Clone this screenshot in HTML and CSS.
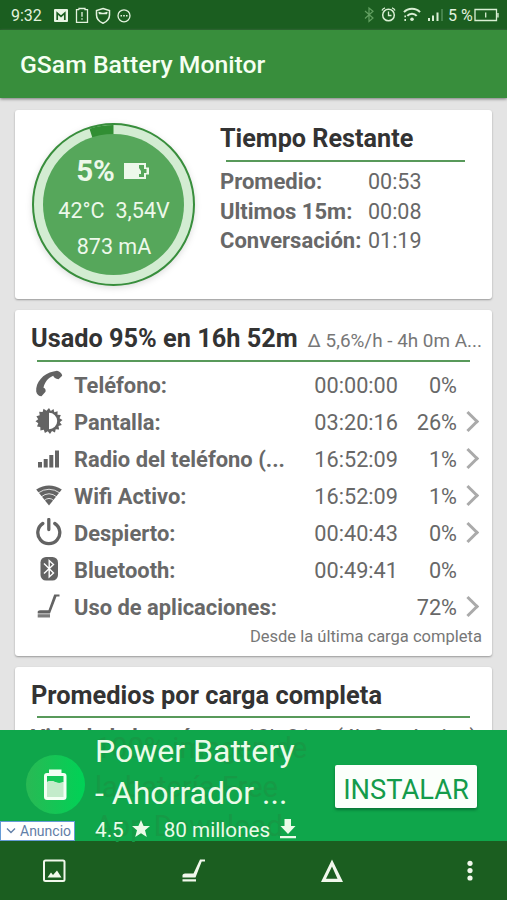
FILE: index.html
```html
<!DOCTYPE html>
<html lang="es">
<head>
<meta charset="utf-8">
<meta name="viewport" content="width=device-width, initial-scale=1">
<title>GSam Battery Monitor</title>
<link rel="stylesheet" href="styles.css">
</head>
<body>
<div class="screen">
  <header class="status">
    <span class="clock">9:32</span>
    <svg class="status-left" width="80" height="18" viewBox="0 0 80 18" fill="none" stroke="#e3f2de" stroke-width="1.3">
      <rect x="1" y="2" width="14" height="13" rx="1" fill="#e8f5e4" stroke="none"/>
      <path d="M4.200 13V6L8 9.300L11.800 6V13" stroke="#1b5e20" stroke-width="1.700"/>
      <path d="M26 2.700H23.500V15.300H34.500V2.700H32V1.500H26V2.700M29 5V9.800M29 11.200V12.800"/>
      <path d="M50 1.500L56.500 3.500V8C56.500 12 53.500 14.800 50 16.200C46.500 14.800 43.500 12 43.500 8V3.500Z" stroke-width="1.500"/>
      <path d="M45.500 5.500L49 6.500M54.500 5.500L51 6.500M46 6.500L54 6.500" stroke-width="1.500"/>
      <circle cx="71" cy="8.800" r="6"/>
      <path d="M67.500 8.800H69M70.200 8.800H71.800M73 8.800H74.500" stroke-width="1.600"/>
    </svg>
    <svg class="status-right" width="84" height="18" viewBox="0 0 84 18" fill="none" stroke="#d9efd4" stroke-width="1.300">
      <path d="M2 5L10 12L6 15.500V2L10 5.200L2 12.500" stroke="#62a061" stroke-width="1.200"/>
      <circle cx="25.500" cy="9" r="5.800" stroke-width="1.500"/>
      <path d="M25.500 5.500V9.500H28.500M19 4.500C19.500 3 20.500 2.200 22 1.800M32 4.500C31.500 3 30.500 2.200 29 1.800"/>
      <path d="M41 6.200C45 1.700 53 1.700 57 6.200M44.300 9.800C46.700 6.900 51.300 6.900 53.700 9.800" stroke-width="2"/>
      <circle cx="49" cy="13.300" r="1.800" fill="#d9efd4" stroke="none"/>
      <path d="M42.200 9.500V11.200M42.200 13V15" stroke-width="1.600"/>
      <path d="M66 15V12M70 15V9.500M74.500 15V6.500" stroke-width="2"/>
      <path d="M79 15V3" stroke="#55905a" stroke-width="1.500"/>
    </svg>
    <span class="percent">5 %</span>
    <svg class="battery" width="26" height="14" viewBox="0 0 26 14" fill="none" stroke="#d9efd4" stroke-width="1.300">
      <path d="M1 1.500H22.500V12.500H1ZM24 5V9.500M11.700 4.500V9.500"/>
    </svg>
  </header>
  <div class="appbar"><h1>GSam Battery Monitor</h1></div>

  <main class="content">
    <section class="card summary">
      <div class="gauge">
        <svg class="ring" width="166" height="166" viewBox="0 0 166 166">
          <circle cx="82.500" cy="82.500" r="80.500" fill="#d3ecd2" stroke="#388e3c" stroke-width="2"/>
          <path d="M82.500 82V3A79.500 79.500 0 0 0 58.500 6.700Z" fill="#318e33"/>
          <circle cx="82.500" cy="82.500" r="70.500" fill="#56a75b"/>
        </svg>
        <div class="readings">
          <div class="level">5%
            <svg width="25" height="16" viewBox="0 0 25 16"><path fill="#edf8ea" fill-rule="evenodd" d="M0 0H22V4.500H25V11.500H22V16H0ZM15 2V5L17 8V11H15V14H20V10H22.500V6H20V2Z"/></svg>
          </div>
          <div class="temps"><span>42°C</span><span>3,54V</span></div>
          <div class="current">873 mA</div>
        </div>
      </div>
      <div class="remaining">
        <h2>Tiempo Restante</h2>
        <hr>
        <dl>
          <dt>Promedio:</dt><dd>00:53</dd>
          <dt>Ultimos 15m:</dt><dd>00:08</dd>
          <dt>Conversación:</dt><dd>01:19</dd>
        </dl>
      </div>
    </section>

    <section class="card usage">
      <div class="heading"><h2>Usado 95% en 16h 52m</h2><span>Δ 5,6%/h - 4h 0m A...</span></div>
      <hr>
      <ul>
        <li>
          <svg class="icon" viewBox="0 0 28 28"><path d="M18.500 1.500L22 0.800C25 1.500 27 3.500 27.200 5.800L23.500 9.300C20.500 9 18.800 7.500 18.200 5.800C13 8 9.500 12.500 8.500 17.800C10.200 18.200 11 20 10.500 21.800L6.500 26.300C4 26.300 1.700 24.200 1.200 21.500C0.500 12.500 8 3.500 18.500 1.500Z"/></svg>
          <b>Teléfono:</b><time>00:00:00</time><span>0%</span><i></i>
        </li>
        <li>
          <svg class="icon" viewBox="0 0 28 28"><path fill-rule="evenodd" d="M14 1L15.800 4L18.500 1.900L19.300 5.200L22.600 4.200L22.500 7.700L25.800 8L24.500 11.200L27.500 13L24.800 15.200L26.800 18L23.500 19L24.100 22.400L20.700 22.200L20 25.500L17 24L15 26.900L12.800 24.200L9.900 26.100L8.800 22.800L5.400 23.500L5.300 20L2 19.500L3.300 16.300L.5 14.300L3.200 12.200L1.400 9.300L4.700 8.200L4.200 4.800L7.600 5.100L8.500 1.800L11.500 3.700ZM14 5.800V22.200A8.200 8.200 0 0 0 14 5.800Z"/></svg>
          <b>Pantalla:</b><time>03:20:16</time><span>26%</span><i class="more"></i>
        </li>
        <li>
          <svg class="icon" viewBox="0 0 28 28"><path d="M3 18H7V23.500H3ZM8.700 15H12.700V23.500H8.700ZM14.300 11H18.300V23.500H14.300ZM20 6.500H24V23.500H20Z"/></svg>
          <b>Radio del teléfono (...</b><time>16:52:09</time><span>1%</span><i class="more"></i>
        </li>
        <li>
          <svg class="icon" viewBox="0 0 28 28"><path d="M1.200 8.500Q14 .5 26.800 8.500L14 24.500Z"/><path d="M3 12Q14 4.500 25 12M6 16Q14 9.500 22 16M9 19.800Q14 15 19 19.800" fill="none" stroke="#fff" stroke-width=".8"/></svg>
          <b>Wifi Activo:</b><time>16:52:09</time><span>1%</span><i class="more"></i>
        </li>
        <li>
          <svg class="icon" viewBox="0 0 28 28"><path d="M7.800 5.500A11 11 0 1 0 19.800 5.500M13.800 1.500V11.500" fill="none" stroke="#636363" stroke-width="3.300" stroke-linecap="round"/></svg>
          <b>Despierto:</b><time>00:40:43</time><span>0%</span><i class="more"></i>
        </li>
        <li>
          <svg class="icon" viewBox="0 0 28 28"><rect x="5.500" y="2" width="17.500" height="23.500" rx="5.500"/><path d="M9 8.500L18.500 18L14.200 22V5.500L18.500 9.500L9 18.500" fill="none" stroke="#fff" stroke-width="1.400"/></svg>
          <b>Bluetooth:</b><time>00:49:41</time><span>0%</span><i></i>
        </li>
        <li>
          <svg class="icon" viewBox="0 0 28 28"><path d="M2.700 19.500Q3.500 18.200 5.500 18.200H13.500L19.200 2.500H24.500V4.500H21.500L15 21.500H2.700Z"/><path d="M2.700 22.200H15V25.500H2.700Z" fill="#7c7c7c"/></svg>
          <b>Uso de aplicaciones:</b><time></time><span>72%</span><i class="more"></i>
        </li>
      </ul>
      <p>Desde la última carga completa</p>
    </section>

    <section class="card averages">
      <h2>Promedios por carga completa</h2>
      <hr>
      <div class="lifetime"><b>Vida de la batería:</b><span>12h 21m (4h 2m Activo)</span></div>
    </section>
  </main>

  <aside class="ad">
    <div class="ghost">100% imagen de<br>la batería Free<br>App Download</div>
    <svg class="ad-icon" width="60" height="60" viewBox="0 0 60 60">
      <defs><linearGradient id="g"><stop stop-color="#29b954"/><stop offset="1" stop-color="#00d256"/></linearGradient></defs>
      <circle cx="30.500" cy="30.500" r="29.500" fill="url(#g)"/>
      <path d="M24 15.500H36.500V19H38.500Q41.500 19 41.500 22V43Q41.500 46 38.500 46H22Q19 46 19 43V22Q19 19 22 19H24Z" fill="#f4fff4"/>
      <path d="M22 22H38.500V28Q34 30 30 28Q26 26 22 28Z" fill="#16c758"/>
      <path d="M22 28Q26 26 30 28Q34 30 38.500 28V43H22Z" fill="#c3ebca"/>
    </svg>
    <div class="ad-copy">
      <div class="ad-title">Power Battery<br>- Ahorrador ...</div>
      <div class="ad-meta"><span>4.5</span>
        <svg width="18" height="18" viewBox="0 0 18 18"><path fill="#eafbe9" d="M9 0L11.600 6H18L13 10.300L14.800 17L9 13.200L3.200 17L5 10.300L0 6H6.400Z"/></svg>
        <span class="millions">80 millones</span>
        <svg width="16" height="20" viewBox="0 0 16 20"><path fill="#eafbe9" d="M4.500 0H11V7H15.500L8 15L.5 7H4.500ZM0 17H16V19.300H0Z"/></svg>
      </div>
    </div>
    <div class="install">INSTALAR</div>
    <div class="ad-tag"><svg width="10" height="8" viewBox="0 0 10 8"><path d="M1 1.500L5 5.500L9 1.500" fill="none" stroke="#6280a8" stroke-width="1.400"/></svg>Anuncio</div>
  </aside>

  <nav class="toolbar">
    <svg viewBox="0 0 28 28"><rect x="4" y="3.500" width="20.500" height="20.500" rx="1.500" fill="none" stroke="#f1f8ec" stroke-width="2"/><path d="M7.500 20.500L11 15.500L13 18L17 13.500L21.500 20.500Z"/></svg>
    <svg viewBox="0 0 28 28"><path d="M3.500 18Q4 16.500 6 16.500H14.500L21 2.500H26V4.500H22.700L16.500 20.500H3.500ZM3.500 22.200H17V24.400H3.500Z"/></svg>
    <svg viewBox="0 0 28 28"><path fill-rule="evenodd" d="M15 2.500L26 25H4ZM15 9.500L9 21.700H20.500Z"/></svg>
    <svg viewBox="0 0 28 28"><circle cx="14" cy="6.300" r="2.600"/><circle cx="14" cy="13.600" r="2.600"/><circle cx="14" cy="21" r="2.600"/></svg>
  </nav>
</div>
</body>
</html>
```
FILE: styles.css
```css
* { box-sizing: border-box; }
body { margin: 0; font-family: Roboto, "Liberation Sans", sans-serif; }
h1, h2, p, ul, dl, dd { margin: 0; padding: 0; }
svg { display: block; flex: none; }
.screen { width: 507px; height: 900px; display: flex; flex-direction: column; overflow: hidden; background: #e4e4e4; }

.status { height: 30px; flex: none; display: flex; align-items: center; padding: 0 7px 0 11px; background: #1b5e20; color: #e3f2de; }
.clock { width: 42px; font-size: 16px; }
.status-left { margin-top: 1px; }
.status-right { margin-left: auto; }
.percent { width: 26px; margin-left: 1px; font-size: 16px; white-space: nowrap; }
.appbar { height: 68px; flex: none; display: flex; align-items: center; padding: 1px 20px 0; background: #388e3c; box-shadow: 0 1px 3px #777; color: #f5fff2; }
.appbar h1 { font-size: 24.750px; font-weight: 500; white-space: nowrap; }

.content { flex: 1; min-height: 0; display: flex; flex-direction: column; gap: 11px; padding: 12px 15px 0; overflow: hidden; }
.card { flex: none; background: #fff; border-radius: 3px; box-shadow: 0 1px 2px #999; }
h2 { padding-top: 1px; font-size: 25.200px; line-height: 30px; font-weight: 700; color: #333; white-space: nowrap; }
hr { height: 2px; margin: 0; border: 0; background: #58995a; }

.summary { height: 189px; display: flex; padding: 12px 16px 0; }
.gauge { position: relative; width: 166px; height: 166px; flex: none; }
.ring { filter: drop-shadow(0 2px 3px #ddd); }
.readings { position: absolute; inset: 0; padding-top: 33px; text-align: center; color: #edf8ea; font-size: 21.500px; }
.level { display: flex; align-items: center; justify-content: center; gap: 9px; height: 32px; padding-right: 3px; font-size: 29.500px; font-weight: 700; }
.temps { display: flex; justify-content: center; gap: 11px; margin-top: 11px; line-height: 26px; }
.current { margin-top: 10px; line-height: 26px; }
.remaining { flex: 1; padding: 1px 11px 0 23px; }
.remaining hr { margin: 6px 0 5px 6px; }
dl { display: grid; grid-template-columns: 148px 1fr; grid-auto-rows: 29.500px; align-items: center; font-size: 22px; color: #686868; white-space: nowrap; }
dt { font-weight: 700; }
dd { font-size: 21.500px; }

.usage { height: 346px; padding: 13px 10px 0 16px; }
.heading { display: flex; align-items: baseline; justify-content: space-between; white-space: nowrap; }
.heading h2 { font-size: 25.300px; }
.heading span { font-size: 18.900px; color: #777; }
.usage hr, .averages hr { margin: 6px 12px 5px 6px; }
ul { list-style: none; }
li { height: 37px; display: grid; grid-template-columns: 43px 1fr 84px 59px 25px; align-items: center; font-size: 21.900px; color: #686868; white-space: nowrap; }
.icon { width: 28px; height: 28px; margin: -3px 0 0 4px; fill: #636363; }
li time, li span { font-size: 21.700px; text-align: right; }
.more { width: 15px; height: 15px; margin: -3px 0 0 4px; border: solid #aaa; border-width: 3px 3px 0 0; transform: rotate(45deg); }
.usage p { text-align: right; font-size: 16.550px; line-height: 22px; color: #777; }
.averages { height: 120px; padding: 12px 10px 0 16px; }
.averages h2 { font-size: 25.400px; }
.lifetime { display: flex; gap: 12px; font-size: 21.700px; line-height: 30px; color: #686868; white-space: nowrap; }
.lifetime b { width: 202px; }

.ad { position: relative; height: 111px; flex: none; display: flex; background: #0fa64b; color: #eafbe9; }
.ghost { position: absolute; left: 95px; top: -1px; font-size: 29px; line-height: 39px; color: #169a46; white-space: nowrap; }
.ad-icon { margin: 24px 10px 0 25px; }
.ad-copy { position: relative; width: 240px; white-space: nowrap; }
.ad-title { font-size: 32px; line-height: 42px; }
.ad-meta { display: flex; align-items: center; height: 32px; font-size: 20.700px; }
.ad-meta span { margin-right: 8px; }
.ad-meta svg { margin-top: -3px; }
.ad-meta .millions { margin: 0 10px 0 14px; }
.install { width: 142px; height: 43px; margin: 35px 0 0; display: flex; align-items: center; justify-content: center; border-radius: 2px; background: #fbfffb; box-shadow: 0 2px 3px #087436; color: #149b4b; font-size: 27.300px; padding-top: 7px; }
.ad-tag { position: absolute; left: 0; bottom: 0; width: 75px; height: 20px; display: flex; align-items: center; gap: 4px; padding-left: 5px; border: 1px solid #659bd5; background: #fff; color: #6280a8; font-size: 14px; }

.toolbar { height: 59px; flex: none; display: flex; justify-content: space-between; align-items: center; padding: 0 23px 0 40px; background: #1b5e20; }
.toolbar svg { width: 28px; height: 28px; fill: #f1f8ec; }
```
